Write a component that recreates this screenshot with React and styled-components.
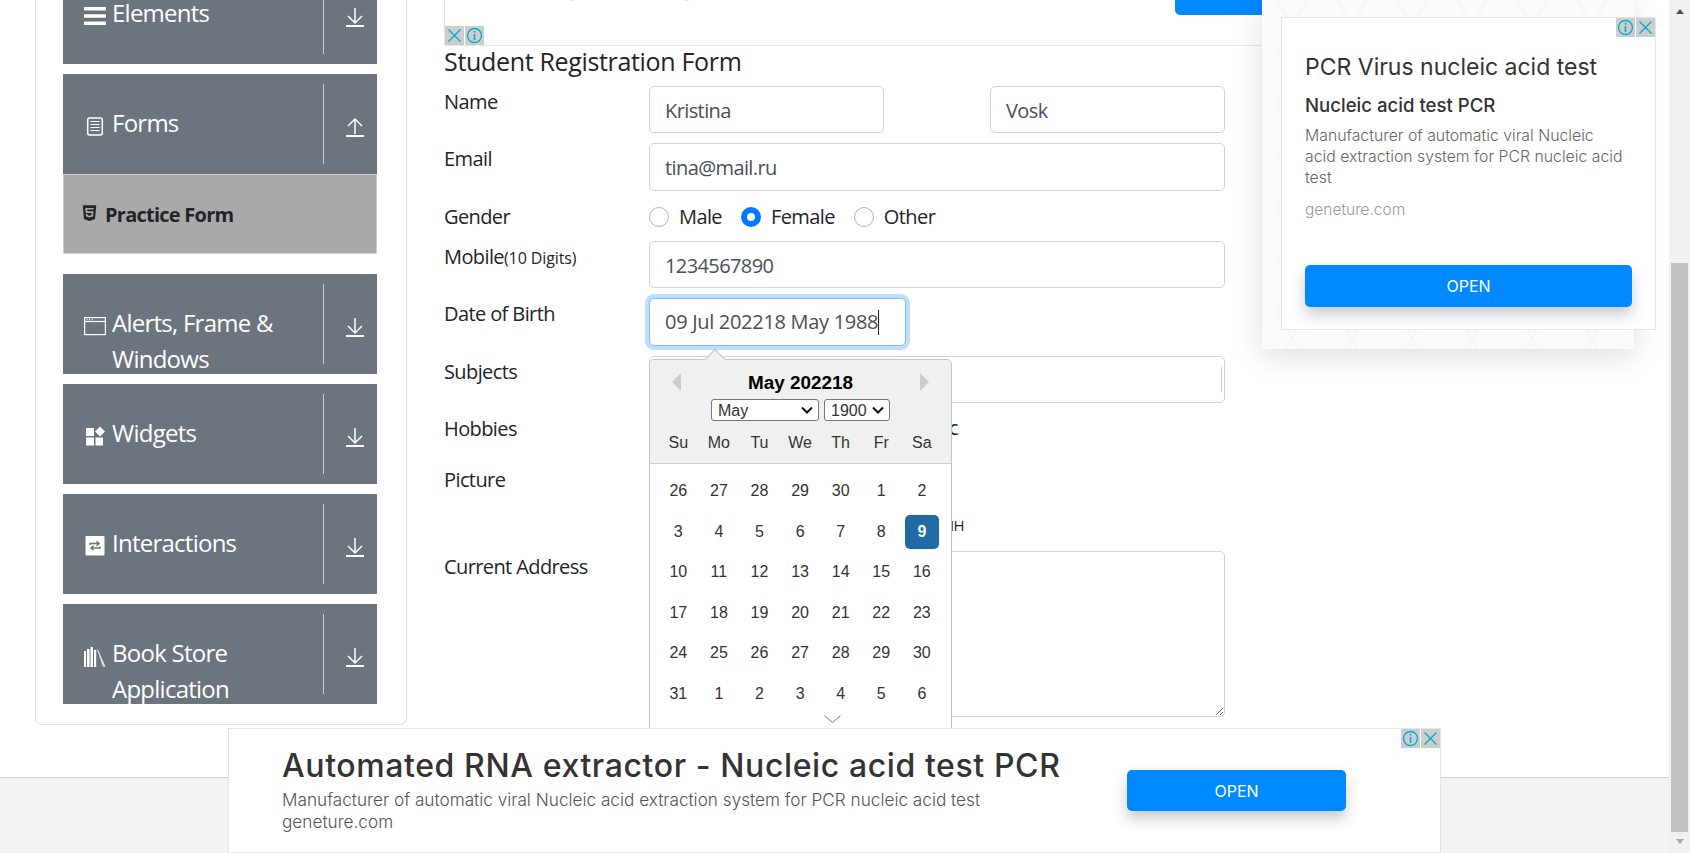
import React from 'react';
import styled, { createGlobalStyle } from 'styled-components';
import { FaHtml5 } from 'react-icons/fa';

const GlobalStyle = createGlobalStyle`
  html, body {
    margin: 0;
    height: 100%;
    overflow: hidden;
    background: #fff;
    font-family: "Open Sans", "Noto Sans", sans-serif;
    color: #212529;
  }
  * { box-sizing: border-box; }
`;

const Shell = styled.div`
  position: relative;
  display: flex;
  height: 853px;
  overflow: hidden;
`;

const Page = styled.div`
  flex: 1;
  display: flex;
  flex-direction: column;
  min-width: 0;
`;

const Body = styled.div`
  display: flex;
  margin-top: -36px;
`;

/* Sidebar */
const SideCard = styled.aside`
  flex: none;
  width: 372px;
  margin-left: 35px;
  padding: 0 29px 20px 27px;
  border: 1px solid #dfdfdf;
  border-top: 0;
  border-radius: 0 0 7px 7px;
  display: flex;
  flex-direction: column;
`;

const Item = styled.div`
  display: flex;
  flex: none;
  height: 100px;
  overflow: hidden;
  background: #6c757d;
  color: #fff;
  margin-top: ${(p) => p.$gap}px;
`;

const ItemTitle = styled.div`
  flex: 1;
  display: flex;
  gap: 6px;
  padding: 31px 0 0 21px;
  font-size: 24px;
  line-height: 36px;
  letter-spacing: -0.75px;
`;

const IconBox = styled.svg`
  flex: none;
  width: 22px;
  height: 22px;
  margin-top: 10px;
`;

const Toggle = styled.div`
  flex: none;
  width: 54px;
  margin: 10px 0;
  border-left: 1px solid #c9ccd0;
  display: flex;
  align-items: center;
  justify-content: center;
  padding: 7px 0 0 8px;
`;

const ActiveItem = styled.div`
  flex: none;
  height: 80px;
  background: #a9a9a9;
  border: 1px solid #ccd0d4;
  display: flex;
  align-items: center;
  gap: 8px;
  padding: 0 0 0 18px;
  font-size: 20px;
  font-weight: 700;
  letter-spacing: -0.75px;
  color: #212529;
  svg { width: 15px; height: 18px; margin-top: -3px; }
`;

/* Form */
const Content = styled.main`
  flex: none;
  width: 830px;
  margin-left: 37px;
`;

const TopAd = styled.div`
  position: relative;
  height: 82px;
  border-left: 1px solid #e5e5e5;
  border-bottom: 1px solid #e5e5e5;
  padding: 7px 0 0 27px;
  font-family: Inter, sans-serif;
  font-size: 30px;
  line-height: 36px;
  color: #999;
`;

const TopAdButton = styled.div`
  position: absolute;
  right: 0;
  top: 0;
  width: 99px;
  height: 51px;
  background: #0088ff;
  border-radius: 0 0 0 5px;
`;

const Badges = styled.div`
  position: absolute;
  display: flex;
  gap: 1px;
  ${(p) => p.$place}
`;

const Badge = styled.span`
  display: flex;
  width: 19px;
  height: 19px;
  align-items: center;
  justify-content: center;
  background: #cdcdcd;
  svg { display: block; }
`;

const FormTitle = styled.h5`
  margin: 0 0 10px;
  font-size: 25px;
  line-height: 30px;
  font-weight: 500;
  letter-spacing: -0.33px;
`;

const Form = styled.div`
  width: 781px;
`;

const Row = styled.div`
  position: relative;
  display: grid;
  grid-template-columns: 205px 1fr;
  margin-bottom: ${(p) => p.$after ?? 10}px;
  font-size: 20px;
  line-height: 30px;
  letter-spacing: -0.6px;
`;

const Label = styled.span`
  padding-top: 1px;
`;

const Small = styled.small`
  font-size: 16px;
  letter-spacing: -0.1px;
`;

const Pair = styled.div`
  display: flex;
  justify-content: space-between;
`;

const Field = styled.input`
  display: block;
  width: ${(p) => p.$w || '100%'};
  height: ${(p) => (p.$tall ? 48 : 47)}px;
  padding: 9px 15px 8px;
  border: 1px solid #ced4da;
  border-radius: 5px;
  background: #fff;
  font: inherit;
  letter-spacing: -0.6px;
  color: #495057;
  outline: none;
`;

const FocusField = styled(Field)`
  border-color: #80bdff;
  box-shadow: 0 0 0 4px rgba(0, 123, 255, 0.25);
  white-space: nowrap;
  height: 48px;
  line-height: 30px;
  padding: 8px 15px;
  letter-spacing: -0.3px;
`;

const Caret = styled.span`
  display: inline-block;
  width: 1px;
  height: 25px;
  background: #222;
  vertical-align: -6px;
`;

const SubjectsBox = styled.div`
  height: 47px;
  border: 1px solid #ced4da;
  border-radius: 5px;
  display: flex;
  justify-content: flex-end;
  padding: 10px 2px;
`;

const SelectDivider = styled.span`
  width: 1px;
  background: #ccc;
`;

const Radios = styled.div`
  display: flex;
  gap: 19px;
  padding-top: 1px;
`;

const RadioLabel = styled.label`
  display: flex;
  align-items: center;
  gap: 10px;
`;

const RadioDot = styled.span`
  width: 20px;
  height: 20px;
  border-radius: 50%;
  border: ${(p) => (p.$on ? '6px solid #007bff' : '1px solid #adb5bd')};
  background: #fff;
`;

const Clipped = styled.div`
  display: flex;
  justify-content: flex-end;
  gap: 20px;
  width: ${(p) => p.$w}px;
  height: ${(p) => p.$h}px;
  padding-top: ${(p) => p.$top || 0}px;
  white-space: nowrap;
  font-size: ${(p) => p.$size || 20}px;
`;

const Textarea = styled.textarea`
  display: block;
  width: 100%;
  height: 166px;
  border: 1px solid #ced4da;
  border-radius: 5px;
  outline: none;
`;

/* Date picker */
const Calendar = styled.div`
  position: absolute;
  left: 205px;
  top: 61px;
  width: 303px;
  height: 380px;
  z-index: 2;
  background: #fff;
  border: 1px solid #c4c4c4;
  border-radius: 5px;
  font-family: "Liberation Sans", Arial, sans-serif;
  font-size: 16px;
  letter-spacing: 0;
  color: #333;
  &::before {
    content: '';
    position: absolute;
    left: 57px;
    top: -8px;
    width: 15px;
    height: 15px;
    background: #f0f0f0;
    border-left: 1px solid #c4c4c4;
    border-top: 1px solid #c4c4c4;
    transform: rotate(45deg);
  }
`;

const CalHeader = styled.div`
  position: relative;
  height: 104px;
  background: #f0f0f0;
  border-bottom: 1px solid #cfcfcf;
  border-radius: 5px 5px 0 0;
  padding-top: 12px;
  text-align: center;
`;

const CalMonth = styled.div`
  font-size: 18.9px;
  line-height: 22px;
  font-weight: 700;
  color: #000;
`;

const NavArrow = styled.span`
  position: absolute;
  top: 13px;
  ${(p) => (p.$next ? 'right: 22px;' : 'left: 22px;')}
  border-style: solid;
  border-color: transparent;
  border-width: 9px 0;
  ${(p) => (p.$next ? 'border-left: 9px solid #ccc;' : 'border-right: 9px solid #ccc;')}
`;

const CalSelects = styled.div`
  display: flex;
  justify-content: flex-start;
  gap: 5px;
  margin: 5px 0 0 61px;
`;

const CalSelect = styled.select`
  width: ${(p) => p.$w}px;
  height: 22px;
  padding: 0 0 0 6px;
  appearance: none;
  background: #fff url("data:image/svg+xml,%3Csvg xmlns='http://www.w3.org/2000/svg' width='12' height='8' fill='none' stroke='%23111' stroke-width='2'%3E%3Cpath d='M1 1.5l5 5 5-5'/%3E%3C/svg%3E") no-repeat right 5px center;
  border: 1px solid #767676;
  border-radius: 3px;
  font-family: "Liberation Sans", Arial, sans-serif;
  font-size: 16px;
  color: #333;
`;

const Grid = styled.div`
  display: grid;
  grid-template-columns: repeat(7, 40.6px);
  padding: 0 8px;
  justify-items: center;
  align-items: center;
`;

const DayName = styled.span`
  line-height: 43px;
`;

const Days = styled(Grid)`
  grid-auto-rows: 40.5px;
  padding-top: 7px;
`;

const Day = styled.span`
  width: 34px;
  height: 34px;
  display: flex;
  align-items: center;
  justify-content: center;
  border-radius: 5px;
  background: ${(p) => (p.$sel ? '#216ba5' : 'transparent')};
  color: ${(p) => (p.$sel ? '#fff' : 'inherit')};
  font-weight: ${(p) => (p.$sel ? 700 : 400)};
`;

const MoreChevron = styled.svg`
  position: absolute;
  left: 174px;
  top: 355px;
`;

/* Footer */
const Footer = styled.footer`
  flex: 1;
  margin-top: 52px;
  background: #f3f3f3;
  border-top: 1px solid #cfcfcf;
`;

/* Scrollbar */
const ScrollTrack = styled.div`
  flex: none;
  width: 21px;
  background: #f1f1f1;
  display: flex;
  flex-direction: column;
  align-items: center;
  position: relative;
  z-index: 4;
`;

const ScrollArrow = styled.span`
  width: 0;
  height: 0;
  margin-top: ${(p) => p.$top}px;
  border-left: 4px solid transparent;
  border-right: 4px solid transparent;
  ${(p) => (p.$down ? 'border-top: 5px solid #a3a3a3;' : 'border-bottom: 5px solid #505050;')}
`;

const ScrollThumb = styled.div`
  width: 17px;
  height: 569px;
  margin-top: 249px;
  background: #c1c1c1;
`;

/* Ads */
const SideAd = styled.div`
  position: absolute;
  z-index: 3;
  left: 1262px;
  top: 0;
  width: 372px;
  height: 349px;
  background-color: #fbfbfb;
  background-image:
    linear-gradient(60deg, transparent 48%, #f7f7f7 49%, #f7f7f7 51%, transparent 52%),
    linear-gradient(120deg, transparent 48%, #f7f7f7 49%, #f7f7f7 51%, transparent 52%);
  background-size: 60px 52px;
  box-shadow: 0 8px 28px rgba(0, 0, 0, 0.13);
`;

const SideAdBox = styled.div`
  position: absolute;
  left: 19px;
  top: 17px;
  width: 375px;
  height: 313px;
  background: #fff;
  border: 1px solid #e6e6e6;
  padding: 34px 0 0 23px;
  font-family: Inter, sans-serif;
`;

const SideTitle = styled.div`
  font-size: 23px;
  line-height: 30px;
  color: #333;
`;

const SideSub = styled.div`
  margin-top: 11px;
  font-size: 18.6px;
  line-height: 24px;
  font-weight: 450;
  color: #333;
`;

const SideText = styled.div`
  margin-top: 8px;
  white-space: nowrap;
  font-size: 15.8px;
  line-height: 21px;
  font-weight: 300;
  color: #666;
`;

const Domain = styled.div`
  margin-top: ${(p) => p.$top}px;
  font-size: ${(p) => p.$size}px;
  line-height: ${(p) => p.$line}px;
  font-weight: 300;
  color: ${(p) => p.$color};
`;

const OpenButton = styled.div`
  flex: none;
  display: flex;
  align-items: center;
  justify-content: center;
  width: ${(p) => p.$w}px;
  height: ${(p) => p.$h}px;
  margin-top: ${(p) => p.$top}px;
  background: #0088ff;
  color: #fff;
  border-radius: 5px;
  font-size: 16px;
  box-shadow: 0 8px 14px rgba(40, 50, 80, 0.25);
`;

const BottomAd = styled.div`
  position: absolute;
  z-index: 3;
  left: 228px;
  top: 728px;
  width: 1213px;
  height: 125px;
  background: #fff;
  border: 1px solid #e6e6e6;
  display: flex;
  padding: 19px 0 0 53px;
  font-family: Inter, sans-serif;
`;

const BottomText = styled.div`
  width: 845px;
`;

const BottomTitle = styled.div`
  font-size: 32px;
  line-height: 36px;
  font-weight: 500;
  letter-spacing: 0.6px;
  color: #333;
`;

const BottomDesc = styled.div`
  margin-top: 5px;
  font-size: 17.2px;
  line-height: 22px;
  font-weight: 300;
  color: #555;
`;

const CloseIcon = () => (
  <svg width="15" height="15" viewBox="0 0 15 15" fill="none" stroke="#00aecd" strokeWidth="1.4">
    <path d="M1.5 1.5l12 12M13.5 1.5l-12 12" />
  </svg>
);

const InfoIcon = () => (
  <svg width="17" height="17" viewBox="0 0 17 17" fill="none" stroke="#00aecd">
    <circle cx="8.5" cy="8.5" r="7" strokeWidth="1.4" />
    <path d="M8.5 7v6" strokeWidth="1.6" />
    <path d="M8.5 4v1.6" strokeWidth="1.6" />
  </svg>
);

const Arrow = ({ up }) => (
  <svg width="18" height="19" viewBox="0 0 18 19" fill="none" stroke="#fff" strokeWidth="1.5">
    {up ? <path d="M9 16V1M2 8l7-7 7 7" /> : <path d="M9 0v15M2 8l7 7 7-7" />}
    <path d="M0 18h18" strokeWidth="2" />
  </svg>
);

const Bars = () => (
  <IconBox viewBox="0 0 22 22" fill="#fff">
    <rect y="2" width="22" height="3.4" rx="0.5" />
    <rect y="9.3" width="22" height="3.4" rx="0.5" />
    <rect y="16.6" width="22" height="3.4" rx="0.5" />
  </IconBox>
);

const FormIcon = () => (
  <IconBox viewBox="0 0 22 22" fill="none" stroke="#fff">
    <rect x="3.7" y="3" width="14.6" height="17" rx="2" strokeWidth="1.5" />
    <path d="M6.5 6.5h9M6.5 9.5h9M6.5 12.5h9M6.5 15.5h9" strokeWidth="1.2" />
  </IconBox>
);

const WindowIcon = () => (
  <IconBox viewBox="0 0 22 22" fill="none" stroke="#fff" strokeWidth="1.2">
    <rect x="0.6" y="2.6" width="20.8" height="17" />
    <path d="M1 6.5h20" />
    <path d="M2.5 4.5h1M5 4.5h1M7.5 4.5h1" strokeWidth="1.6" />
  </IconBox>
);

const WidgetIcon = () => (
  <IconBox viewBox="0 0 22 22" fill="#fff">
    <rect x="2" y="3" width="8" height="8" />
    <rect x="2" y="12.5" width="8" height="8" />
    <rect x="11.5" y="12.5" width="7.5" height="8" />
    <path d="M16 1.5l5 5-5 5-5-5z" />
  </IconBox>
);

const RepeatIcon = () => (
  <IconBox viewBox="0 0 22 22">
    <rect x="1.5" y="1" width="19" height="19.5" rx="1" fill="#fff" />
    <path
      d="M6 10V8.5h8.5M12.5 6.2l2.6 2.3-2.6 2.3M16 11.5V13H7.5M9.5 10.7L6.9 13l2.6 2.3"
      fill="none"
      stroke="#6c757d"
      strokeWidth="1.4"
    />
  </IconBox>
);

const BooksIcon = () => (
  <IconBox viewBox="0 0 22 22" fill="#fff">
    <path d="M0 6h2v16H0zM3 4h2.6v18H3zM6.5 2H9v20H6.5zM10 5h2.2v17H10z" />
    <path d="M13 5l1-.4 7.4 17-1.2.4zM15 10l.8-.3 4 12-.9.3z" opacity="0.8" />
  </IconBox>
);

const dayRows = [
  [26, 27, 28, 29, 30, 1, 2],
  [3, 4, 5, 6, 7, 8, 9],
  [10, 11, 12, 13, 14, 15, 16],
  [17, 18, 19, 20, 21, 22, 23],
  [24, 25, 26, 27, 28, 29, 30],
  [31, 1, 2, 3, 4, 5, 6],
];
const dayNames = ['Su', 'Mo', 'Tu', 'We', 'Th', 'Fr', 'Sa'];

const MenuItem = ({ icon, title, up, gap }) => (
  <Item $gap={gap}>
    <ItemTitle>
      {icon}
      <span>{title}</span>
    </ItemTitle>
    <Toggle>
      <Arrow up={up} />
    </Toggle>
  </Item>
);

const DatePicker = () => (
  <Calendar>
    <CalHeader>
      <NavArrow />
      <NavArrow $next />
      <CalMonth>May 202218</CalMonth>
      <CalSelects>
        <CalSelect $w={108} defaultValue="May">
          <option>May</option>
        </CalSelect>
        <CalSelect $w={66} defaultValue="1900">
          <option>1900</option>
        </CalSelect>
      </CalSelects>
      <Grid>
        {dayNames.map((d) => (
          <DayName key={d}>{d}</DayName>
        ))}
      </Grid>
    </CalHeader>
    <Days>
      {dayRows.flat().map((d, i) => (
        <Day key={i} $sel={i === 13}>
          {d}
        </Day>
      ))}
    </Days>
    <MoreChevron width="17" height="8" viewBox="0 0 17 8" fill="none" stroke="#777">
      <path d="M0.5 0.5l8 7 8-7" />
    </MoreChevron>
  </Calendar>
);

export default function App() {
  return (
    <Shell>
      <GlobalStyle />
      <Page>
        <Body>
          <SideCard>
            <MenuItem gap={0} icon={<Bars />} title="Elements" />
            <MenuItem gap={10} icon={<FormIcon />} title="Forms" up />
            <ActiveItem>
              <FaHtml5 />
              Practice Form
            </ActiveItem>
            <MenuItem gap={20} icon={<WindowIcon />} title="Alerts, Frame & Windows" />
            <MenuItem gap={10} icon={<WidgetIcon />} title="Widgets" />
            <MenuItem gap={10} icon={<RepeatIcon />} title="Interactions" />
            <MenuItem gap={10} icon={<BooksIcon />} title="Book Store Application" />
          </SideCard>
          <Content>
            <TopAd>
              Automatic Extractor
              <TopAdButton />
              <Badges $place="left: 0; bottom: 0;">
                <Badge>
                  <CloseIcon />
                </Badge>
                <Badge>
                  <InfoIcon />
                </Badge>
              </Badges>
            </TopAd>
            <FormTitle>Student Registration Form</FormTitle>
            <Form>
              <Row>
                <Label>Name</Label>
                <Pair>
                  <Field $w="235px" readOnly value="Kristina" />
                  <Field $w="235px" readOnly value="Vosk" />
                </Pair>
              </Row>
              <Row>
                <Label>Email</Label>
                <Field $tall readOnly value="tina@mail.ru" />
              </Row>
              <Row $after={9}>
                <Label>Gender</Label>
                <Radios>
                  <RadioLabel>
                    <RadioDot />
                    Male
                  </RadioLabel>
                  <RadioLabel>
                    <RadioDot $on />
                    Female
                  </RadioLabel>
                  <RadioLabel>
                    <RadioDot />
                    Other
                  </RadioLabel>
                </Radios>
              </Row>
              <Row>
                <Label>
                  Mobile<Small>(10 Digits)</Small>
                </Label>
                <Field readOnly value="1234567890" />
              </Row>
              <Row>
                <Label>Date of Birth</Label>
                <FocusField as="div" $w="257px">
                  09 Jul 202218 May 1988
                  <Caret />
                </FocusField>
                <DatePicker />
              </Row>
              <Row>
                <Label>Subjects</Label>
                <SubjectsBox>
                  <SelectDivider />
                </SubjectsBox>
              </Row>
              <Row>
                <Label>Hobbies</Label>
                <Clipped $w={309} $h={41}>
                  <span>Sports</span>
                  <span>Reading</span>
                  <span>Music</span>
                </Clipped>
              </Row>
              <Row>
                <Label>Picture</Label>
                <Clipped $w={315} $h={77} $top={46} $size={15}>
                  <span>Select picture</span>
                  <span>NH</span>
                </Clipped>
              </Row>
              <Row $after={0}>
                <Label>Current Address</Label>
                <Textarea readOnly />
              </Row>
            </Form>
          </Content>
        </Body>
        <Footer />
      </Page>
      <ScrollTrack>
        <ScrollArrow $top={9} />
        <ScrollThumb />
        <ScrollArrow $down $top={7} />
      </ScrollTrack>

      <SideAd>
        <SideAdBox>
          <Badges $place="right: 0; top: 0;">
            <Badge>
              <InfoIcon />
            </Badge>
            <Badge>
              <CloseIcon />
            </Badge>
          </Badges>
          <SideTitle>PCR Virus nucleic acid test</SideTitle>
          <SideSub>Nucleic acid test PCR</SideSub>
          <SideText>
            Manufacturer of automatic viral Nucleic
            <br />
            acid extraction system for PCR nucleic acid
            <br />
            test
          </SideText>
          <Domain $top={11} $size={15.5} $line={21} $color="#999">
            geneture.com
          </Domain>
          <OpenButton $w={327} $h={42} $top={45}>
            OPEN
          </OpenButton>
        </SideAdBox>
      </SideAd>

      <BottomAd>
        <Badges $place="right: 0; top: 0;">
          <Badge>
            <InfoIcon />
          </Badge>
          <Badge>
            <CloseIcon />
          </Badge>
        </Badges>
        <BottomText>
          <BottomTitle>Automated RNA extractor - Nucleic acid test PCR</BottomTitle>
          <BottomDesc>Manufacturer of automatic viral Nucleic acid extraction system for PCR nucleic acid test</BottomDesc>
          <Domain $top={0} $size={17.2} $line={22} $color="#555">
            geneture.com
          </Domain>
        </BottomText>
        <OpenButton $w={219} $h={41} $top={22}>
          OPEN
        </OpenButton>
      </BottomAd>
    </Shell>
  );
}
